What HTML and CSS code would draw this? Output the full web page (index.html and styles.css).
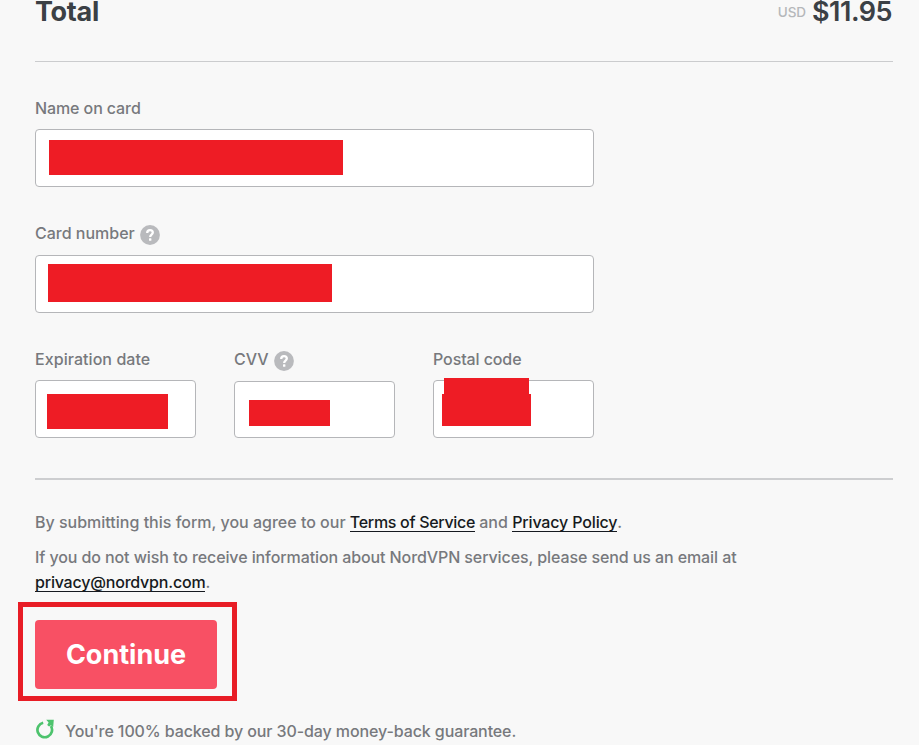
FILE: index.html
```html
<!DOCTYPE html>
<html lang="en">
<head>
<meta charset="utf-8">
<title>Payment</title>
<link rel="stylesheet" href="styles.css">
</head>
<body>
<svg class="defs" width="0" height="0" aria-hidden="true">
  <symbol id="help" viewBox="0 0 20 20">
    <circle cx="10" cy="10" r="9.9" fill="#b9babd"/>
    <path d="M7.2 8.1C7.2 6.3 8.3 5.2 10 5.2s2.8.9 2.8 2.4c0 2.1-2.6 2-2.6 4.3" fill="none" stroke="#fff" stroke-width="2.3"/>
    <rect x="9" y="13.3" width="2.4" height="2.4" rx=".5" fill="#fff"/>
  </symbol>
</svg>
<main class="page">
  <header class="total">
    <h1 class="total-label">Total</h1>
    <div class="amount"><span class="currency">USD</span><span class="price">$11.95</span></div>
  </header>
  <form class="form">
    <div class="field">
      <div class="label name-label">Name on card</div>
      <div class="input"><span class="mask mask-name"></span></div>
    </div>
    <div class="field field-number">
      <div class="label">Card number<svg class="help"><use href="#help"/></svg></div>
      <div class="input"><span class="mask mask-number"></span></div>
    </div>
    <div class="row">
      <div class="field">
        <div class="label exp-label">Expiration date</div>
        <div class="input"><span class="mask mask-exp"></span></div>
      </div>
      <div class="field field-cvv">
        <div class="label">CVV<svg class="help"><use href="#help"/></svg></div>
        <div class="input"><span class="mask mask-cvv"></span></div>
      </div>
      <div class="field">
        <div class="label postal-label">Postal code</div>
        <div class="input"><span class="mask mask-postal-top"></span><span class="mask mask-postal"></span></div>
      </div>
    </div>
  </form>
  <section class="legal">
    <p class="terms">By submitting this form, you agree to our <a class="tos">Terms of Service</a> and <a class="policy">Privacy Policy</a>.</p>
    <p class="optout">If you do not wish to receive information about NordVPN services, please send us an email at<br><a class="mail">privacy@nordvpn.com</a>.</p>
  </section>
  <div class="highlight"><button class="continue" type="button">Continue</button></div>
  <footer class="guarantee">
    <svg class="refresh" viewBox="0 0 20 20"><path d="M8.2 3.8A7.3 7.3 0 1 0 15.9 7" fill="none" stroke="#4dc36d" stroke-width="2.7"/><path d="M11.2.8H18.8L18.2 8 16 6.2 14 7.6 12.2 6 13.6 3.6Z" fill="#4dc36d"/></svg>
    <span>You're 100% backed by our 30-day money-back guarantee.</span>
  </footer>
</main>
</body>
</html>
```
FILE: styles.css
```css
* { box-sizing: border-box; }
body {
  margin: 0;
  height: 745px;
  overflow: hidden;
  background: #f8f8f8;
  color: #77797d;
  font: 500 16px/24px Inter, "Liberation Sans", sans-serif;
}
.defs { display: block; height: 0; }
.page { width: 858px; margin-left: 35px; }
.total {
  height: 62px;
  display: flex;
  justify-content: space-between;
  border-bottom: 1px solid #cbccce;
  color: #3b4045;
  line-height: 24px;
}
.total-label { margin: 0; font-size: 27px; font-weight: 700; letter-spacing: -.3px; }
.amount { display: flex; padding-right: 1px; }
.currency { margin-right: 6px; color: #b5b7ba; font-size: 13.5px; font-weight: 500; letter-spacing: -.1px; }
.price { font-size: 27px; font-weight: 600; letter-spacing: -.5px; }
.form { padding-top: 34px; }
.field { width: 100%; }
.label { height: 33px; display: flex; white-space: nowrap; }
.name-label, .postal-label { letter-spacing: -.1px; }
.exp-label { letter-spacing: .06px; }
.help { width: 20px; height: 20px; margin: 4px 0 0 5px; }
.input {
  position: relative;
  height: 58px;
  border: 1px solid #b5b6b9;
  border-radius: 4px;
  background: #fff;
}
.form > .field { width: 559px; }
.field-number { margin-top: 34px; }
.field-number .label { height: 34px; }
.row { display: grid; grid-template-columns: repeat(3, 161px); column-gap: 38px; margin-top: 34px; }
.field-cvv .label { height: 34px; }
.field-cvv .input { height: 57px; }
.mask { position: absolute; background: #ee1c25; }
.mask-name { left: 13px; top: 10px; width: 294px; height: 35px; }
.mask-number { left: 12px; top: 8px; width: 284px; height: 38px; }
.mask-exp { left: 11px; top: 13px; width: 121px; height: 35px; }
.mask-cvv { left: 14px; top: 18px; width: 81px; height: 26px; }
.mask-postal-top { left: 10px; top: -3px; width: 85px; height: 16px; }
.mask-postal { left: 8px; top: 13px; width: 89px; height: 32px; }
.legal { margin-top: 40px; padding-top: 30px; border-top: 2px solid #cdced0; white-space: nowrap; }
.legal p { margin: 0; line-height: 25px; }
.legal .optout { margin-top: 10px; letter-spacing: -.095px; }
.legal a { color: #161a20; box-shadow: 0 1px 0 #161a20; line-height: 18px; display: inline-block; }
.legal .tos { letter-spacing: -.31px; }
.legal .policy { letter-spacing: -.15px; }
.legal .mail { letter-spacing: -.2px; }
.highlight {
  width: 219px;
  height: 99px;
  margin: 7px 0 0 -17px;
  padding: 13px 12px;
  border: 5px solid #e81d26;
}
.continue {
  display: block;
  width: 182px;
  height: 69px;
  padding: 0;
  border: 0;
  border-radius: 4px;
  background: #f85064;
  color: #fff;
  font: 700 27px/69px Inter, "Liberation Sans", sans-serif;
}
.guarantee { display: flex; margin-top: 18px; white-space: nowrap; letter-spacing: -.105px; }
.refresh { width: 20px; height: 20px; margin-right: 10px; }
```
